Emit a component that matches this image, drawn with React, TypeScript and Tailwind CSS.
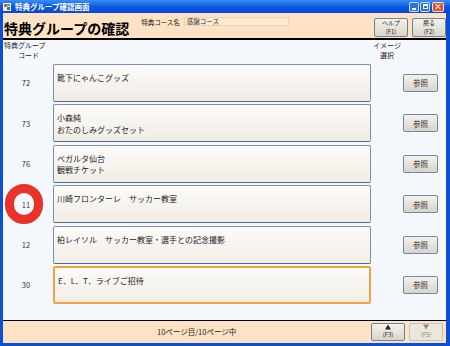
import React from "react";

const FONT = { fontFamily: '"Noto Sans CJK JP", "Noto Sans", sans-serif' };

type Row = { code: string; lines: string[]; marked?: boolean; focused?: boolean };

const rows: Row[] = [
  { code: "72", lines: ["靴下にゃんこグッズ"] },
  { code: "73", lines: ["小森純", "おたのしみグッズセット"] },
  { code: "76", lines: ["ベガルタ仙台", "観戦チケット"] },
  { code: "11", lines: ["川崎フロンターレ　サッカー教室"], marked: true },
  { code: "12", lines: ["柏レイソル　サッカー教室・選手との記念撮影"] },
  { code: "30", lines: ["E．L．T．ライブご招待"], focused: true },
];

function SmallButton({ top, bottom, disabled }: { top: React.ReactNode; bottom: string; disabled?: boolean }) {
  return (
    <div
      className={`flex h-full w-[34px] flex-col items-center justify-center rounded-[2px] border text-[6px] leading-[8.5px] ${
        disabled
          ? "border-[#c9c3b6] bg-[#ece7dc] text-[#8a8a8a]"
          : "border-[#6d8197] bg-gradient-to-b from-[#f4f2ec] to-[#d9d5cb] text-[#222]"
      }`}
    >
      {top}
      <span>{bottom}</span>
    </div>
  );
}

function Arrow({ up, color }: { up?: boolean; color: string }) {
  return (
    <svg width="6" height="6" viewBox="0 0 6 6" className="mb-[1px]">
      <polygon points={up ? "3,0.5 6,5.5 0,5.5" : "0,0.5 6,0.5 3,5.5"} fill={color} />
    </svg>
  );
}

export default function App() {
  return (
    <div className="flex h-[346px] w-[450px] flex-col bg-[#0a4fd4]" style={FONT}>
      {/* title bar */}
      <div className="flex h-[13px] items-center bg-gradient-to-b from-[#3b8df5] via-[#0b5be2] to-[#0848cc] pl-[3px] pr-[6px]">
        <svg width="8" height="8" viewBox="0 0 8 8" className="shrink-0">
          <rect x="0" y="0" width="8" height="8" fill="#f4f1e6" />
          <rect x="1" y="1" width="3" height="3" fill="#d9602a" />
          <rect x="4" y="4" width="3" height="3" fill="#3a6fc8" />
          <rect x="4" y="1" width="3" height="2" fill="#6aa84f" />
        </svg>
        <span className="ml-[4px] text-[7.5px] font-bold leading-none text-white">特典グループ確認画面</span>
        <div className="ml-auto flex gap-[1px]">
          <div className="flex h-[10px] w-[10px] items-end justify-center rounded-[2px] border border-white/80 bg-[#2a6ff0] pb-[1px]">
            <div className="h-[2px] w-[4px] bg-white" />
          </div>
          <div className="flex h-[10px] w-[10px] items-center justify-center rounded-[2px] border border-white/80 bg-[#2a6ff0]">
            <div className="h-[5px] w-[5px] border border-t-2 border-white" />
          </div>
          <div className="ml-[1px] flex h-[10px] w-[12px] items-center justify-center rounded-[2px] border border-white/80 bg-[#e0532c] text-[8px] font-bold leading-none text-white">
            ×
          </div>
        </div>
      </div>

      <div className="mb-[3px] ml-[3px] mr-[4px] flex flex-1 flex-col">
        {/* header */}
        <div className="flex h-[27px] border-b-2 border-black bg-[#fde2c5]">
          <div className="pl-[1px] pt-[7px] text-[14px] font-bold leading-[16px] text-black">特典グループの確認</div>
          <div className="ml-[12px] pt-[5px] text-[6.5px] leading-[8px] text-[#222]">特典コース名</div>
          <div className="ml-[4px] mt-[4px] h-[9px] w-[105px] border border-[#e6d4bc] bg-[#fde8d0] pl-[2px] text-[6.5px] leading-[7px] text-[#333]">
            感謝コース
          </div>
          <div className="ml-auto mt-[5px] flex h-[19px] gap-[4px]">
            <SmallButton top={<span>ヘルプ</span>} bottom="(F1)" />
            <SmallButton top={<span>戻る</span>} bottom="(F2)" />
          </div>
        </div>

        {/* content */}
        <div className="flex flex-1 flex-col bg-[#f4f8fd]">
          <div className="flex h-[24px] text-[7px] leading-[10.2px] text-[#222]">
            <div className="pl-[1px]">
              <div>特典グループ</div>
              <div className="pl-[14px]">コード</div>
            </div>
            <div className="ml-auto mr-[45px] text-center">
              <div>イメージ</div>
              <div>選択</div>
            </div>
          </div>

          <div className="flex flex-col gap-[2.4px]">
            {rows.map((r) => (
              <div key={r.code} className="flex h-[38px] items-center">
                <div className="relative flex w-[46px] justify-center text-[7.5px] text-[#333]">
                  {r.marked && (
                    <div className="absolute left-[2px] top-1/2 h-[40px] w-[38px] -translate-y-1/2 rounded-full border-[9px] border-[#e8332b]" />
                  )}
                  <span className="relative">{r.code}</span>
                </div>
                <div
                  className={`ml-[4px] h-full w-[318px] rounded-[2px] bg-gradient-to-b from-[#fcfbf9] to-[#f1ede5] pl-[3px] pt-[7px] text-[8px] leading-[11.6px] text-[#222] ${
                    r.focused ? "border-2 border-[#f0a53c]" : "border border-[#7591b2] border-b-[#4f6a8c]"
                  }`}
                >
                  {r.lines.map((l) => (
                    <div key={l}>{l}</div>
                  ))}
                </div>
                <div className="ml-[32px] flex h-[18px] w-[35px] items-center justify-center rounded-[2px] border border-[#6f88a4] bg-gradient-to-b from-[#f4f2ec] to-[#d8d4ca] text-[7.5px] text-[#333]">
                  参照
                </div>
              </div>
            ))}
          </div>
        </div>

        {/* footer */}
        <div className="flex h-[23px] items-center border-t border-black bg-[#fde2c5]">
          <div className="pl-[154px] text-[7.5px] text-[#222]">10ページ目/10ページ中</div>
          <div className="ml-auto mr-[3px] flex h-[18px] gap-[4px]">
            <SmallButton top={<Arrow up color="#222" />} bottom="(F3)" />
            <SmallButton top={<Arrow color="#8a8a8a" />} bottom="(F5)" disabled />
          </div>
        </div>
      </div>
    </div>
  );
}
